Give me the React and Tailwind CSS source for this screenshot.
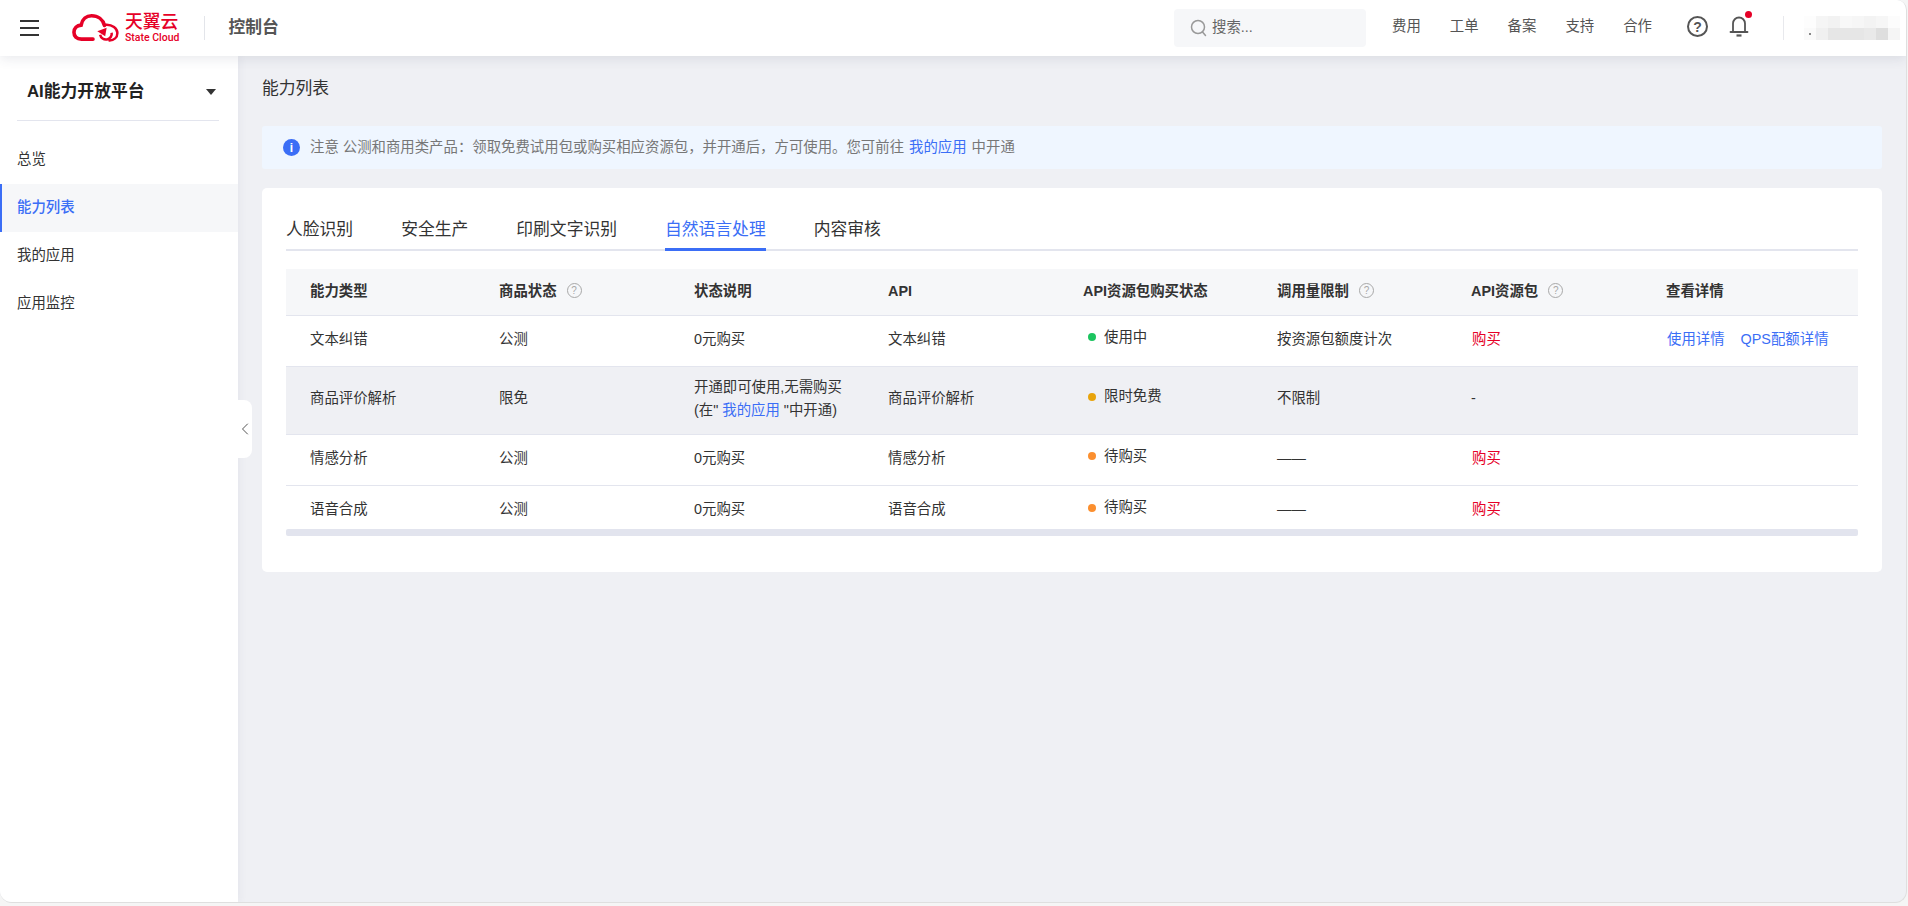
import { ChevronLeft } from 'lucide-react';

const fontStack = '"Liberation Sans","Noto Sans CJK SC",sans-serif';

const navLinks = ['费用', '工单', '备案', '支持', '合作'];
const tabs = ['人脸识别', '安全生产', '印刷文字识别', '自然语言处理', '内容审核'];
const menu = ['总览', '能力列表', '我的应用', '应用监控'];

// pixelated username block
const blurCells = [
  '#fdfdfd', '#f5f5f5', '#f2f2f2', '#f8f8f8', '#f6f6f6', '#f3f3f3', '#f6f6f6', '#fcfcfc',
  '#fafafa', '#f0f0f0', '#e6e6e6', '#e6e6e6', '#e6e6e6', '#e9e9e9', '#dedede', '#f5f5f5',
];

function Logo() {
  return (
    <div className="flex items-center gap-[6px]">
      <svg width="47" height="28" viewBox="0 0 130 78" fill="none" stroke="#e60027">
        <path
          d="M58 70H26C12 70 5 62 5 51C5 40 13 32 25 31C28 14 40 5 54 5C72 5 86 16 90 32"
          strokeWidth="10"
          strokeLinecap="round"
        />
        <path d="M92 30C112 28 126 41 126 53C126 66 116 73 104 74" strokeWidth="7" strokeLinecap="round" />
        <path d="M78 58A16 16 0 0 0 110 52" strokeWidth="7" />
        <path d="M70 48L96 38L92 62Z" fill="#e60027" stroke="none" />
      </svg>
      <div className="flex flex-col items-start">
        <span className="text-[17.8px] leading-[19px] font-medium text-[#e60027]">天翼云</span>
        <span className="font-['Roboto'] text-[10.5px] leading-[11px] text-[#e60027] font-medium whitespace-nowrap">State Cloud</span>
      </div>
    </div>
  );
}

function HelpDot() {
  return (
    <span className="-mt-[2px] inline-flex w-[15px] h-[15px] rounded-full border border-[#a8a8a8] items-center justify-center text-[10px] leading-none text-[#a8a8a8] font-normal">
      ?
    </span>
  );
}

function Header() {
  return (
    <header className="relative z-20 h-[56px] shrink-0 bg-white flex items-center shadow-[0_2px_12px_rgba(50,60,90,0.12)]">
      <button className="ml-[20px] w-[19px] flex flex-col gap-[5px]">
        <span className="h-[2px] bg-[#333]" />
        <span className="h-[2px] bg-[#333]" />
        <span className="h-[2px] bg-[#333]" />
      </button>
      <div className="ml-[33px]">
        <Logo />
      </div>
      <div className="ml-[24px] w-px h-[24px] bg-[#e3e5ea]" />
      <div className="ml-[24px] text-[16.8px] font-bold text-[#555]">控制台</div>

      <div className="ml-auto w-[192px] h-[38px] rounded-[4px] bg-[#f6f7f9] flex items-center pl-[16px] text-[14.4px] text-[#666]">
        <svg width="18" height="18" viewBox="0 0 18 18" fill="none" stroke="#999" strokeWidth="1.5">
          <circle cx="8" cy="8" r="6.5" />
          <path d="M12.5 13l3 3.5" strokeLinecap="round" />
        </svg>
        <span className="ml-[4px]">搜索...</span>
      </div>
      <nav className="ml-[26px] -mt-[2px] flex gap-[29px] text-[14.4px] text-[#555]">
        {navLinks.map((n) => (
          <span key={n}>{n}</span>
        ))}
      </nav>
      <div className="ml-[35px] -mt-[3px] w-[21px] h-[21px] rounded-full border-2 border-[#555] flex items-center justify-center text-[14px] font-bold leading-none text-[#555]">
        ?
      </div>
      <div className="relative ml-[21px] -mt-[4px]">
        <svg width="20" height="22" viewBox="0 0 20 22" fill="none" stroke="#555" strokeWidth="1.8">
          <path d="M4 16.5V8.5a6 6 0 0 1 12 0V16.5" />
          <path d="M1.5 17h17" strokeLinecap="round" />
          <path d="M7.5 20.5h5" strokeWidth="2.2" />
        </svg>
        <span className="absolute top-[-4px] right-[-3px] w-[7px] h-[7px] rounded-full bg-[#e60027]" />
      </div>
      <div className="ml-[34px] w-px h-[24px] bg-[#e8e9ed]" />
      <div className="relative ml-[20px] mr-[6px] w-[96px] grid grid-cols-8 h-[24px]">
        {blurCells.map((c, i) => (
          <div key={i} style={{ background: c }} />
        ))}
        <span className="absolute left-[5px] top-[17px] w-[2px] h-[2px] bg-[#888]" />
      </div>
    </header>
  );
}

function Sidebar() {
  return (
    <aside className="relative z-10 w-[238px] shrink-0 bg-white shadow-[2px_0_8px_rgba(50,60,90,0.05)]">
      <div className="ml-[17px] w-[202px] h-[65px] pt-[7px] border-b border-[#e3e5ee] flex items-center justify-between pl-[10px] pr-[3px]">
        <span className="text-[16.8px] font-bold text-[#222]">AI能力开放平台</span>
        <span className="w-0 h-0 border-x-[5px] border-x-transparent border-t-[6px] border-t-[#333]" />
      </div>
      <ul className="mt-[15px] text-[14.4px] text-[#333]">
        {menu.map((m) => (
          <li
            key={m}
            className={
              m === '能力列表'
                ? 'h-[48px] flex items-center pl-[15px] border-l-2 border-[#3b6ef6] bg-[#f6f7f9] text-[#3b6ef6] font-medium'
                : 'h-[48px] flex items-center pl-[17px]'
            }
          >
            {m}
          </li>
        ))}
      </ul>
      <div className="absolute left-[238px] top-[344px] w-[14px] h-[58px] bg-white rounded-r-[8px] flex items-center justify-center">
        <ChevronLeft size={20} strokeWidth={1.2} className="shrink-0 text-[#555]" />
      </div>
    </aside>
  );
}

const thClass = 'text-left font-bold pl-[24px] text-[14.4px] text-[#333]';
const tdClass = 'pl-[24px] pb-[2px] align-middle';

function StatusDot({ color, children }) {
  return (
    <div className="flex items-center gap-[8px] pl-[5px] -mt-[4px]">
      <span className={'w-[8px] h-[8px] rounded-full ' + color} />
      <span>{children}</span>
    </div>
  );
}

function Row({ name, state, note, status, limit, pack, detail, className }) {
  return (
    <tr className={className}>
      <td className={tdClass}>{name}</td>
      <td className={tdClass}>{state}</td>
      <td className={tdClass}>{note}</td>
      <td className={tdClass}>{name}</td>
      <td className={tdClass}>{status}</td>
      <td className={tdClass}>{limit}</td>
      <td className={tdClass}>{pack}</td>
      <td className={tdClass}>{detail}</td>
    </tr>
  );
}

function AbilityTable() {
  const buy = <span className="ml-[1px] text-[#e60027]">购买</span>;
  return (
    <div className="mt-[18px]">
      <table className="w-[1572px] table-fixed border-collapse text-[14.4px] text-[#333]">
        <colgroup>
          <col className="w-[189px]" />
          <col className="w-[195px]" />
          <col className="w-[194px]" />
          <col className="w-[195px]" />
          <col className="w-[194px]" />
          <col className="w-[194px]" />
          <col className="w-[195px]" />
          <col className="w-[216px]" />
        </colgroup>
        <thead>
          <tr className="h-[46px] bg-[#f6f7f9] border-b border-[#e3e5ee]">
            <th className={thClass}>能力类型</th>
            <th className={thClass}>
              <span className="inline-flex items-center gap-[10px]">
                商品状态 <HelpDot />
              </span>
            </th>
            <th className={thClass}>状态说明</th>
            <th className={thClass}>API</th>
            <th className={thClass}>API资源包购买状态</th>
            <th className={thClass}>
              <span className="inline-flex items-center gap-[10px]">
                调用量限制 <HelpDot />
              </span>
            </th>
            <th className={thClass}>
              <span className="inline-flex items-center gap-[10px]">
                API资源包 <HelpDot />
              </span>
            </th>
            <th className={thClass}>查看详情</th>
          </tr>
        </thead>
        <tbody>
          <Row
            className="h-[51px] border-b border-[#e3e5ee]"
            name="文本纠错"
            state="公测"
            note="0元购买"
            status={<StatusDot color="bg-[#1cc45f]">使用中</StatusDot>}
            limit="按资源包额度计次"
            pack={buy}
            detail={
              <span className="ml-[1px] text-[#3b6ef6]">
                <span>使用详情</span>
                <span className="ml-[16px]">QPS配额详情</span>
              </span>
            }
          />
          <Row
            className="h-[68px] bg-[#eff0f4] border-b border-[#e3e5ee]"
            name="商品评价解析"
            state="限免"
            note={
              <div className="leading-[23px] whitespace-nowrap">
                开通即可使用,无需购买
                <br />
                (在" <span className="text-[#3b6ef6]">我的应用</span> "中开通)
              </div>
            }
            status={<StatusDot color="bg-[#e8a40c]">限时免费</StatusDot>}
            limit="不限制"
            pack="-"
          />
          <Row
            className="h-[51px] border-b border-[#e3e5ee]"
            name="情感分析"
            state="公测"
            note="0元购买"
            status={<StatusDot color="bg-[#fb8f2f]">待购买</StatusDot>}
            limit="——"
            pack={buy}
          />
          <Row
            className="h-[51px]"
            name="语音合成"
            state="公测"
            note="0元购买"
            status={<StatusDot color="bg-[#fb8f2f]">待购买</StatusDot>}
            limit="——"
            pack={buy}
          />
        </tbody>
      </table>
      {/* horizontal scrollbar sits over the last row */}
      <div className="relative -mt-[7px] h-[7px] bg-[#e2e4ee] rounded-[2px]" />
    </div>
  );
}

export default function App() {
  return (
    <div className="h-[906px] w-[1908px] overflow-hidden bg-[#f5f5f5]" style={{ fontFamily: fontStack }}>
      <div className="h-[903px] w-[1907px] overflow-hidden rounded-tr-[10px] rounded-b-[12px] border-r border-b border-[#dfdfdf] bg-[#eff0f4] flex flex-col">
        <Header />
        <div className="flex flex-1 min-h-0">
          <Sidebar />
          <main className="flex-1 pl-[24px] pt-[22px] pr-[24px]">
            <h1 className="text-[16.8px] leading-[22px] font-normal text-[#333]">能力列表</h1>
            <div className="mt-[26px] h-[43px] bg-[#eff6ff] rounded-[3px] flex items-center pl-[21px] text-[14.4px] text-[#777]">
              <span className="w-[17px] h-[17px] rounded-full bg-[#3b6ef6] text-white text-[12px] font-bold flex items-center justify-center">
                i
              </span>
              <span className="ml-[10px]">
                注意 公测和商用类产品：领取免费试用包或购买相应资源包，并开通后，方可使用。您可前往
                <span className="text-[#3b6ef6] mx-[5px]">我的应用</span>
                中开通
              </span>
            </div>
            <section className="mt-[19px] h-[384px] bg-white rounded-[5px] px-[24px] pt-[24px]">
              <div className="flex gap-[48px] h-[39px] border-b-2 border-[#e3e5ee] text-[16.8px] text-[#333]">
                {tabs.map((t) => (
                  <span
                    key={t}
                    className={
                      t === '自然语言处理'
                        ? 'h-[39px] leading-[36px] border-b-[3px] border-[#3b6ef6] text-[#3b6ef6]'
                        : 'h-[39px] leading-[36px]'
                    }
                  >
                    {t}
                  </span>
                ))}
              </div>
              <AbilityTable />
            </section>
          </main>
        </div>
      </div>
    </div>
  );
}
